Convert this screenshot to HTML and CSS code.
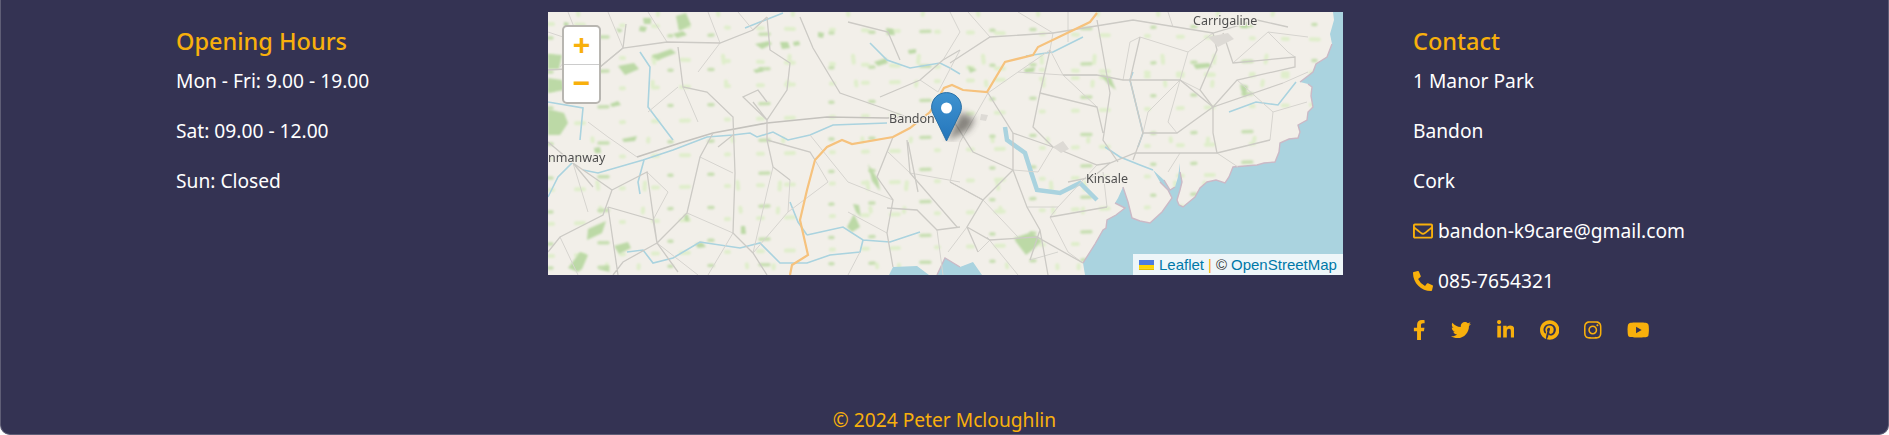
FILE: index.html
```html
<!DOCTYPE html>
<html lang="en">
<head>
<meta charset="utf-8">
<title>Bandon K9 Care</title>
<link rel="stylesheet" href="styles.css">
</head>
<body>
<footer class="footer">
  <div class="columns">
    <section class="info">
      <h2 class="title">Opening Hours</h2>
      <p class="line">Mon - Fri: 9.00 - 19.00</p>
      <p class="line">Sat: 09.00 - 12.00</p>
      <p class="line">Sun: Closed</p>
    </section>
    <div class="map">
      <svg class="tiles" viewBox="0 0 795 263" aria-hidden="true">
        <defs>
          <filter id="soft" x="-5%" y="-5%" width="110%" height="110%"><feGaussianBlur stdDeviation="0.55"/></filter>
          <filter id="softer" x="-5%" y="-5%" width="110%" height="110%"><feGaussianBlur stdDeviation="0.9"/></filter>
          <filter id="label" x="-5%" y="-20%" width="110%" height="140%"><feGaussianBlur stdDeviation="0.35"/></filter>
        </defs>
        <rect width="795" height="263" fill="#f2efe9"/>
        <g filter="url(#softer)" fill="none" stroke-linecap="round">
          <g stroke="#dfeecb" stroke-width="4">
            <path stroke-dasharray="5 23 8 37 3 29" d="M0 12L795 28M0 44L795 66M0 78L795 60M0 112L795 92M0 146L795 130M0 178L795 160M0 212L795 190M0 244L795 226"/>
            <path stroke-dasharray="3 41 7 19 4 53" d="M30 0L60 263M110 0L90 263M170 0L200 263M245 0L225 263M300 0L330 263M375 0L350 263M430 0L460 263M490 0L510 263M550 0L530 263M610 0L630 200M670 0L655 190M725 0L700 170"/>
          </g>
          <g stroke="#c8dfb2" stroke-width="3.500">
            <path stroke-dasharray="4 47 9 61 3 37" d="M0 26L795 12M0 60L795 48M0 96L795 80M0 132L795 118M0 166L795 148M0 200L795 178M0 232L795 214M0 256L795 244"/>
          </g>
        </g>
        <g filter="url(#softer)" fill="#bcd9a6">
          <path d="M0 97l16 4 4 10-8 12H0zM0 66l14 2 2 10-16 3zM0 42l14 1-3 14H0zM70 54l16-3 5 6-14 6zM103 44l20-7 5 4-18 7zM125 22l10-3 4 4-10 3zM128 4l10-3 5 12-12 6zM92 14l7 1-2 5-6-1zM68 16l7 2-4 3zM207 32l14-3 3 3-10 5zM232 30l8 0 2 6-8 1zM205 58l9-2 2 3-8 2zM62 92l8-3 3 4-9 2zM74 127l15-3-2 5-11 1zM46 136l6-1 1 6-6 0zM40 217l18-8-4 12-15 7zM66 234l14-4 3 6-12 6zM20 256l12-16 8 3-6 14-4 3zM50 257l10-3 2 6zM147 232l7-2 4 5-8 1zM136 203l4-1 1 7-4 0zM193 214l4 0 1 8-5 0zM299 215l7-13 6 13-8 5zM305 192l6 1 2 12-5-5zM320 152l10 15 2 12-8-10zM476 57l11-2-1 5-9 1zM645 52l16-1 3 4-16 2zM552 62l11 4 5 12-8-6zM692 72l8 2-3 12-4-8zM466 226l18-6 10 9-8 8-8 6-10-13zM688 10l10 0 2 6-7 0zM420 54l9 4-7 3z"/>
          <path d="M338 16l7 1 2 6-8 0zM326 50l12-4 2 5-10 3zM360 38l8-1 0 4-7 1zM16 10l5 1-1 3-4 0zM95 6l8 0 0 6-7 0zM30 22l4 1-1 4-4-1zM270 20l6 1-1 5-5-1zM245 30l6-1 1 4-6 1z"/>
        </g>
        <g filter="url(#soft)">
          <path fill="#aad3df" d="M785 0L786 8 782 22 784 32 779 45 768 52 765 60 752 70 760 72 764 75 763 84 765 95 760 100 759 108 750 113 752 120 750 126 741 127 732 131 731 140 727 150 716 151 709 153 697 154 685 155 681 165 677 171 668 168 659 170 652 176 647 185 641 190 635 195 631 193 629 188 632 178 634 170 632 160 632 151 630 165 627 175 622 178 616 168 605 158 612 170 620 178 624 186 614 200 602 211 592 209 584 206 580 190 575 175 570 186 567 191 577 196 568 203 559 208 558 216 555 218 547 232 535 251 537 263H795V0Z"/>
          <path fill="#aad3df" d="M389 263L397 246 412 255 425 250 434 263Z"/>
          <path fill="#aad3df" d="M341 263l4-8 24-1 12 9Z"/>
          <path fill="none" stroke="#cbb9c6" stroke-width="1.400" d="M784 32L779 45 768 52 765 60 752 70M760 72L764 75 763 84 765 95 760 100 759 108 750 113 752 120 750 126 741 127 732 131 731 140 727 150 716 151 709 153 697 154 685 155 681 165 677 171 668 168 659 170 652 176 647 185 641 190 635 195 631 193 629 188 632 178 634 170 632 160M627 175L622 178 616 168M612 170L620 178 624 186 614 200 602 211 592 209 584 206 580 190 575 175M567 191L577 196 568 203 559 208 558 216 555 218 547 232 535 251M389 263L397 246 412 255"/>
          <g fill="none" stroke="#aad3df" stroke-width="1.600">
            <path d="M35 158L50 161 95 148 125 138 159 125 185 123 202 121 209 125 225 120 240 128 262 123 285 113 339 111"/>
            <path d="M92 40L102 55 100 95 125 128M0 90L35 96 32 128M0 185L10 165 25 150M96 148L90 170 92 182"/>
            <path d="M79 240L95 238 105 251 125 246 152 230 192 236 212 231 232 251 259 251 282 243 312 240 315 228M259 223L295 215 315 228 342 230 372 220"/>
            <path d="M197 16L235 1M322 31L339 48 362 56 392 51 402 56 412 62M242 190L250 210 259 223M585 60L582 68 595 121 590 135M535 25L505 40 478 44"/>
            <path d="M557 135L572 145 592 153 605 158M681 100L708 90 730 93 748 70"/>
            <path stroke-width="4.500" d="M457 115L459 128 477 141 483 160 489 178 512 181 532 171 549 188"/>
          </g>
          <g fill="none" stroke="#d6d4cf" stroke-width="1">
            <path d="M20 0L32 30 12 55M60 0L75 36M100 0L119 30M160 0L172 31M0 20L30 30M190 0L205 18M150 60L172 31M130 75L100 100M150 110L135 75M40 110L60 125 89 145M40 200L25 151M12 225L30 263M105 208L120 180 99 160M152 145L185 161M139 201L185 221M109 231L150 263M185 221L160 263M205 241L240 200 242 168M225 155L219 180 205 241M240 200L280 170 267 148M312 240L300 263M345 188L300 170 262 123M339 221L300 200M362 161L340 140M389 218L395 263M412 170L362 161M412 130L402 170 435 188M412 130L440 81M395 48L412 20 402 0M372 68L390 80 412 38M420 0L442 25M470 0L505 21M520 0L520 30M620 0L625 15M505 21L502 38 470 60 440 81M470 60L515 63M515 63L549 63M502 38L515 63 549 95M575 68L582 30 592 25 640 40 665 21M632 68L640 40M632 68L620 110 629 121M652 78L632 68M685 51L720 20 740 40 747 45M720 20L760 25M735 71L760 60M722 128L725 100 689 68M725 100L759 90M669 141L690 155M632 141L620 160M595 121L600 100 632 68M505 135L490 160 465 158M479 195L510 195 502 205M435 188L470 225M510 195L549 153M559 195L555 160M502 205L520 240 535 251M482 248L510 240M419 215L400 240M430 240L442 228M439 225L470 263"/>
          </g>
          <g fill="none" stroke="#cccac5" stroke-width="1.300">
            <path stroke="#c4c2bd" stroke-width="1.700" d="M89 145L132 131 165 121 219 111 279 105 339 106 359 105"/>
            <path d="M0 58L52 55 75 36 119 30 172 31 205 18 219 5M130 35L135 75 159 80 185 105 187 161 185 221 205 241 219 263"/>
            <path d="M219 5L222 38 242 51 239 78 219 108 219 128 225 155 242 168M252 5L265 36 292 81 332 95 359 105M332 85L372 68 395 48 412 38"/>
            <path d="M25 151L64 178 55 203 12 225 0 240M64 178L99 160 109 231 139 201 152 145 165 121M60 195L105 208 109 231 130 260M0 130L25 151 45 175M78 12L75 36 52 55"/>
            <path d="M345 125L329 165 345 188 339 221 345 255M359 128L362 161 409 215M339 196L369 198 389 218 412 215M109 231L75 250 65 263M60 195L70 263"/>
            <path d="M440 81L465 121 505 135 549 153 562 151 587 141 632 141 669 141 722 128M402 51L442 25 505 21 585 8 665 21 709 8 740 15"/>
            <path d="M502 38L492 81 485 115 505 135M515 63L549 63 575 68 632 68 665 95 735 71M549 8L562 81 555 128 570 150M492 81L549 95 555 121"/>
            <path d="M592 25L582 68 595 121 585 148M595 121L629 121 665 95M665 21L669 38 652 78 665 95 665 121 669 141M675 21L685 51 747 45 747 55 689 68 665 95"/>
            <path d="M435 188L465 158 479 195 492 218 482 248M502 205L559 195M419 215L442 228 489 225 535 251M402 170L435 188 419 215 430 240M465 158L465 121M520 170L545 165 562 151M492 218L500 263M300 10L340 20 352 48M400 100L425 140 465 158"/>
            <path d="M219 128L262 140 267 148M205 90L219 108 195 85 210 78 219 90M185 123L170 135M360 130L370 180"/>
          </g>
          <path fill="none" stroke="#f6c27d" stroke-width="2.200" d="M242 263L244 253 260 243 252 208 259 178 267 148 279 135 294 128 304 132 345 125 362 116 382 100 396 76 404 73 415 78 439 80 457 50 485 43 490 35 542 10 549 1"/>
          <path fill="#dddad5" d="M384 98l14-2 4 6-12 6zM660 25l20-4 6 6-16 8zM505 135l10-6 6 8-8 4zM433 102l7 1-2 6-6-1z"/>
        </g>
        <g class="places" filter="url(#label)">
          <text x="341" y="111">Bandon</text>
          <text x="0" y="150">nmanway</text>
          <text x="645" y="13">Carrigaline</text>
          <text x="538" y="171">Kinsale</text>
        </g>
      </svg>
      <svg class="marker" viewBox="0 0 62 50" aria-hidden="true">
        <defs>
          <filter id="shade" x="-60%" y="-60%" width="220%" height="220%"><feGaussianBlur stdDeviation="3.500"/></filter>
          <linearGradient id="pin" x1="0" y1="0" x2="0" y2="1"><stop offset="0" stop-color="#3f93d0"/><stop offset="1" stop-color="#2475bb"/></linearGradient>
        </defs>
        <path fill="#3c3a36" opacity=".6" filter="url(#shade)" d="M16 49L38 38 44 27 30 20Z"/>
        <path fill="url(#pin)" stroke="#2a70a5" stroke-width="1" d="M15.500.6C7.200.6.6 7.100.6 15.200c0 3 .9 5.300 2.200 7.700L15.500 49 28.200 22.900c1.300-2.400 2.200-4.700 2.200-7.700C30.400 7.100 23.800.6 15.500.6Z"/>
        <circle cx="15.500" cy="16" r="5.500" fill="#fff"/>
      </svg>
      <div class="zoom">
        <span class="zoom-btn">+</span>
        <span class="zoom-btn">−</span>
      </div>
      <div class="attribution">
        <svg class="flag" viewBox="0 0 12 8" aria-hidden="true"><rect width="12" height="4" fill="#4c7be1"/><rect y="4" width="12" height="3" fill="#ffd500"/><rect y="7" width="12" height="1" fill="#e0bc00"/></svg>
        <a class="link">Leaflet</a><span class="sep">|</span><span>©</span><a class="link">OpenStreetMap</a>
      </div>
    </div>
    <section class="info contact">
      <h2 class="title">Contact</h2>
      <p class="line">1 Manor Park</p>
      <p class="line">Bandon</p>
      <p class="line">Cork</p>
      <p class="line"><svg class="icon" viewBox="0 0 512 512"><path d="M464 64H48C21.49 64 0 85.49 0 112v288c0 26.51 21.49 48 48 48h416c26.51 0 48-21.49 48-48V112c0-26.51-21.49-48-48-48zm0 48v40.805c-22.422 18.259-58.168 46.651-134.587 106.49-16.841 13.247-50.201 45.072-73.413 44.701-23.208.375-56.579-31.459-73.413-44.701C106.18 199.465 70.425 171.067 48 152.805V112h416zM48 400V214.398c22.914 18.251 55.409 43.862 104.938 82.646 21.857 17.205 60.134 55.186 103.062 54.955 42.717.231 80.509-37.199 103.053-54.947 49.528-38.783 82.032-64.401 104.947-82.653V400H48z"/></svg>bandon-k9care@gmail.com</p>
      <p class="line"><svg class="icon" viewBox="0 0 512 512"><path d="M497.39 361.8l-112-48a24 24 0 0 0-28 6.9l-49.6 60.6A370.66 370.66 0 0 1 130.6 204.11l60.6-49.6a23.94 23.94 0 0 0 6.9-28l-48-112A24.16 24.16 0 0 0 122.6.61l-104 24A24 24 0 0 0 0 48c0 256.5 207.9 464 464 464a24 24 0 0 0 23.4-18.6l24-104a24.29 24.29 0 0 0-14.01-27.6z"/></svg>085-7654321</p>
      <div class="social">
        <svg class="s-f" viewBox="0 0 320 512"><path d="M279.14 288l14.22-92.66h-88.91v-60.13c0-25.35 12.42-50.06 52.24-50.06h40.42V6.26S260.43 0 225.36 0c-73.22 0-121.08 44.38-121.08 124.72v70.62H22.89V288h81.39v224h100.17V288z"/></svg>
        <svg class="s-t" viewBox="0 0 512 512"><path d="M459.37 151.716c.325 4.548.325 9.097.325 13.645 0 138.72-105.583 298.558-298.558 298.558-59.452 0-114.68-17.219-161.137-47.106 8.447.974 16.568 1.299 25.34 1.299 49.055 0 94.213-16.568 130.274-44.832-46.132-.975-84.792-31.188-98.112-72.772 6.498.974 12.995 1.624 19.818 1.624 9.421 0 18.843-1.3 27.614-3.573-48.081-9.747-84.143-51.98-84.143-102.985v-1.299c13.969 7.797 30.214 12.67 47.431 13.319-28.264-18.843-46.781-51.005-46.781-87.391 0-19.492 5.197-37.36 14.294-52.954 51.655 63.675 129.3 105.258 216.365 109.807-1.624-7.797-2.599-15.918-2.599-24.04 0-57.828 46.782-104.934 104.934-104.934 30.213 0 57.502 12.67 76.67 33.137 23.715-4.548 46.456-13.32 66.599-25.34-7.798 24.366-24.366 44.833-46.132 57.827 21.117-2.273 41.584-8.122 60.426-16.243-14.292 20.791-32.161 39.308-52.628 54.253z"/></svg>
        <svg class="s-l" viewBox="0 0 448 512"><path d="M100.28 448H7.4V148.9h92.88zM53.79 108.1C24.09 108.1 0 83.5 0 53.8a53.79 53.79 0 0 1 107.58 0c0 29.7-24.1 54.3-53.79 54.3zM447.9 448h-92.68V302.4c0-34.7-.7-79.2-48.29-79.2-48.29 0-55.69 37.7-55.69 76.7V448h-92.78V148.9h89.08v40.8h1.3c12.4-23.5 42.69-48.3 87.88-48.3 94 0 111.28 61.9 111.28 142.3V448z"/></svg>
        <svg class="s-p" viewBox="0 0 496 512"><path d="M496 256c0 137-111 248-248 248-25.6 0-50.2-3.9-73.4-11.1 10.1-16.5 25.2-43.5 30.8-65 3-11.6 15.4-59 15.4-59 8.1 15.4 31.7 28.5 56.8 28.5 74.8 0 128.7-68.8 128.7-154.3 0-81.9-66.9-143.2-152.9-143.2-107 0-163.9 71.8-163.9 150.1 0 36.4 19.4 81.7 50.3 96.1 4.7 2.2 7.2 1.2 8.3-3.3.8-3.4 5-20.3 6.9-28.1.6-2.5.3-4.7-1.7-7.1-10.1-12.5-18.3-35.3-18.3-56.6 0-54.7 41.4-107.6 112-107.6 60.9 0 103.6 41.5 103.6 100.9 0 67.1-33.9 113.6-78 113.6-24.3 0-42.6-20.1-36.7-44.8 7-29.5 20.5-61.3 20.5-82.6 0-19-10.2-34.9-31.4-34.9-24.9 0-44.9 25.7-44.9 60.2 0 22 7.4 36.8 7.4 36.8s-24.5 103.8-29 123.2c-5 21.4-3 51.6-.9 71.2C65.4 450.9 0 361.1 0 256 0 119 111 8 248 8s248 111 248 248z"/></svg>
        <svg class="s-i" viewBox="0 0 448 512"><path d="M224.1 141c-63.6 0-114.9 51.3-114.9 114.9s51.3 114.9 114.9 114.9S339 319.5 339 255.9 287.7 141 224.1 141zm0 189.6c-41.1 0-74.7-33.5-74.7-74.7s33.5-74.7 74.7-74.7 74.7 33.5 74.7 74.7-33.6 74.7-74.7 74.7zm146.4-194.3c0 14.9-12 26.8-26.8 26.8-14.9 0-26.8-12-26.8-26.8s12-26.8 26.8-26.8 26.8 12 26.8 26.8zm76.1 27.2c-1.7-35.9-9.9-67.7-36.2-93.9-26.2-26.2-58-34.4-93.9-36.2-37-2.1-147.9-2.1-184.9 0-35.8 1.7-67.6 9.9-93.9 36.1s-34.4 58-36.2 93.9c-2.1 37-2.1 147.9 0 184.9 1.7 35.9 9.9 67.7 36.2 93.9s58 34.4 93.9 36.2c37 2.1 147.9 2.1 184.9 0 35.9-1.7 67.7-9.9 93.9-36.2 26.2-26.2 34.4-58 36.2-93.9 2.1-37 2.1-147.8 0-184.8zM398.8 388c-7.8 19.6-22.9 34.7-42.6 42.6-29.5 11.7-99.5 9-132.1 9s-102.7 2.6-132.1-9c-19.6-7.8-34.7-22.9-42.6-42.6-11.7-29.5-9-99.5-9-132.1s-2.6-102.7 9-132.1c7.8-19.6 22.9-34.7 42.6-42.6 29.5-11.7 99.5-9 132.1-9s102.7-2.6 132.1 9c19.6 7.8 34.7 22.9 42.6 42.6 11.7 29.5 9 99.5 9 132.1s2.7 102.7-9 132.1z"/></svg>
        <svg class="s-y" viewBox="0 0 576 512"><path d="M549.655 124.083c-6.281-23.65-24.787-42.276-48.284-48.597C458.781 64 288 64 288 64S117.22 64 74.629 75.486c-23.497 6.322-42.003 24.947-48.284 48.597-11.412 42.867-11.412 132.305-11.412 132.305s0 89.438 11.412 132.305c6.281 23.65 24.787 41.5 48.284 47.821C117.22 448 288 448 288 448s170.78 0 213.371-11.486c23.497-6.321 42.003-24.171 48.284-47.821 11.412-42.867 11.412-132.305 11.412-132.305s0-89.438-11.412-132.305zm-317.51 213.508V175.185l142.739 81.205-142.739 81.201z"/></svg>
      </div>
    </section>
  </div>
  <p class="copyright">© 2024 Peter Mcloughlin</p>
</footer>
</body>
</html>
```
FILE: styles.css
```css
html, body {
  margin: 0;
  padding: 0;
  background: #fff;
}

.footer {
  box-sizing: border-box;
  height: 435px;
  padding: 12px 0 0;
  background: #343353;
  border: 1px solid #5f5e76;
  border-top: 0;
  border-radius: 0 0 10px 10px;
  font-family: "Noto Sans", "Open Sans", sans-serif;
  color: #fff;
  overflow: hidden;
}

.columns {
  display: grid;
  grid-template-columns: 372px 795px 1fr;
  padding-left: 175px;
}

.info {
  padding-top: 14px;
}

.contact {
  padding-left: 70px;
}

.title {
  margin: 0;
  height: 25px;
  font-size: 23.500px;
  line-height: 30px;
  font-weight: 500;
  color: #f8b00c;
}

.line {
  display: flex;
  align-items: center;
  margin: 10px 0 0;
  height: 40px;
  font-size: 19.200px;
  line-height: 40px;
  color: #fff;
  white-space: nowrap;
}

.icon {
  width: 20px;
  height: 20px;
  margin-right: 5px;
  fill: #f8b00c;
}

.social {
  display: flex;
  align-items: center;
  gap: 25.500px;
  margin-top: 16px;
  height: 26px;
}

.social svg {
  height: 20px;
  fill: #f8b00c;
}

.s-f { width: 12.500px; }
.s-t { width: 20px; }
.s-l { width: 17.500px; }
.s-p { width: 19.400px; }
.s-i { width: 17.500px; }
.s-y { width: 22.500px; }

.map {
  position: relative;
  width: 795px;
  height: 263px;
  overflow: hidden;
}

.tiles {
  display: block;
  width: 795px;
  height: 263px;
}

.places {
  font-family: "Noto Sans", sans-serif;
  font-size: 12.500px;
  fill: #4f4f4f;
  stroke: #f2efe9;
  stroke-width: 2px;
  paint-order: stroke;
}

.marker {
  position: absolute;
  left: 383px;
  top: 80px;
  width: 62px;
  height: 50px;
}

.zoom {
  position: absolute;
  left: 14px;
  top: 13px;
  display: flex;
  flex-direction: column;
  width: 35px;
  border: 2px solid #b8b6b1;
  border-radius: 5px;
  background: #fff;
}

.zoom-btn {
  display: block;
  height: 37px;
  font-family: "Liberation Sans", sans-serif;
  font-size: 30px;
  font-weight: 700;
  line-height: 36px;
  text-align: center;
  color: #f8b00c;
}

.zoom-btn + .zoom-btn {
  border-top: 1px solid #ccc;
}

.attribution {
  position: absolute;
  right: 0;
  bottom: 0;
  box-sizing: border-box;
  display: flex;
  align-items: center;
  gap: 4px;
  width: 210px;
  height: 21px;
  padding-left: 6px;
  background: rgba(255, 255, 255, .8);
  font-family: "Liberation Sans", sans-serif;
  font-size: 15px;
  color: #333;
  white-space: nowrap;
}

.flag {
  width: 15px;
  height: 10px;
  margin-right: 1px;
}

.link {
  color: #0078a8;
}

.sep {
  color: #f8b00c;
}

.copyright {
  margin: 65px 0 0;
  text-align: center;
  font-size: 19.200px;
  line-height: 24px;
  color: #f8b00c;
}
```
